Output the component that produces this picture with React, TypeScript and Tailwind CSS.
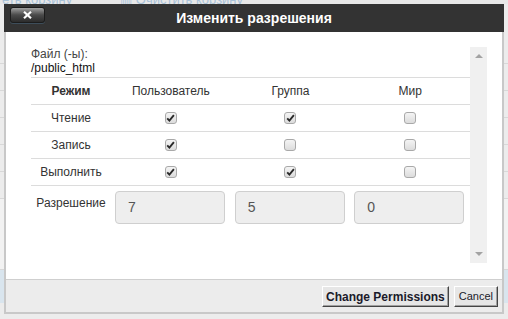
import React from "react";

const rows = [
  { label: "Чтение", checks: [true, true, false] },
  { label: "Запись", checks: [true, false, false] },
  { label: "Выполнить", checks: [true, true, false] },
];

const values = ["7", "5", "0"];

function Box({ checked }: { checked: boolean }) {
  return (
    <span className="flex h-3 w-3 items-center justify-center rounded-[3px] border border-[#a9a9a9] bg-linear-to-b from-[#f4f4f4] to-[#dcdcdc]">
      {checked && (
        <svg width="9" height="8" viewBox="0 0 9 8">
          <path d="M1.2 4.4 L3.4 6.6 L7.9 1.2" fill="none" stroke="#2a2a2a" strokeWidth="1.9" />
        </svg>
      )}
    </span>
  );
}

function Arrow({ up }: { up?: boolean }) {
  return (
    <svg width="8" height="4" viewBox="0 0 8 4">
      <path d={up ? "M0 4 L4 0 L8 4 Z" : "M0 0 L8 0 L4 4 Z"} fill="#a3a3a3" />
    </svg>
  );
}

export default function App() {
  return (
    <div className="relative h-[319px] w-[508px] overflow-hidden bg-[#ececec] font-['Liberation_Sans',Arial,sans-serif] text-[12px] text-[#333]">
      {/* page behind the dialog */}
      <div className="flex h-[4px] gap-8 overflow-hidden bg-[#e8e8e8] pl-[2px] text-[13px] leading-none text-[#a9c2d8]">
        <span className="-mt-[7px]">еть корзину</span>
        <span className="-mt-[7px] ml-4">▥ Очистить корзину</span>
      </div>
      <div className="flex flex-col">
        <div className="h-[60px] border-b border-[#d8d8d8]" />
        <div className="h-[27px] border-b border-[#d8d8d8]" />
        <div className="h-[27px] border-b border-[#d8d8d8]" />
        <div className="h-[27px] border-b border-[#d8d8d8]" />
        <div className="h-[27px] border-b border-[#d8d8d8]" />
        <div className="h-[27px] border-b border-[#d8d8d8]" />
        <div className="h-[71px] border-b border-[#d8d8d8] bg-[#f2f2f2]" />
        <div className="h-[33px] bg-[#d9e5ee]" />
      </div>

      {/* dialog */}
      <div className="absolute left-[4px] top-[4px] flex h-[310px] w-[500px] flex-col">
        <div className="grid h-[28px] grid-cols-[1fr_auto_1fr] items-center bg-[#333]">
          <div className="self-start pl-[6px] pt-[3px]">
            <div className="flex h-[16px] w-[35px] items-center justify-center rounded-[3px] border border-[#1c1c1c] bg-linear-to-b from-[#a0a0a0] via-[#4a4a4a] to-[#2c2c2c] shadow-[0_1px_0_#3d4d5a]">
              <svg width="9" height="8" viewBox="0 0 9 8">
                <path d="M1 0.8 L8 7.2 M8 0.8 L1 7.2" stroke="#fff" strokeWidth="2.2" />
              </svg>
            </div>
          </div>
          <div className="text-[14px] font-bold text-white">Изменить разрешения</div>
          <div />
        </div>

        <div className="flex flex-1 flex-col border-x-2 border-b-2 border-[#c8c8c8]">
          <div className="flex h-[247px] bg-white pb-[16px] pl-[25px] pr-[15px] pt-[15px]">
            <div className="flex flex-1 flex-col">
              <div className="mb-[2px] leading-[14px]">
                <div className="text-[#444]">Файл (-ы):</div>
                <div className="text-[#111]">/public_html</div>
              </div>
              <div className="grid grid-cols-[80px_1fr_1fr_1fr]">
                <div className="col-span-4 grid grid-cols-subgrid border-t border-[#dcdcdc]">
                  <div className="flex h-[26px] items-center justify-center font-bold">Режим</div>
                  <div className="flex h-[26px] items-center justify-center">Пользователь</div>
                  <div className="flex h-[26px] items-center justify-center">Группа</div>
                  <div className="flex h-[26px] items-center justify-center">Мир</div>
                </div>
                {rows.map((r) => (
                  <div key={r.label} className="col-span-4 grid grid-cols-subgrid border-t border-[#dcdcdc]">
                    <div className="flex h-[26px] items-center justify-center">{r.label}</div>
                    {r.checks.map((c, i) => (
                      <div key={i} className="flex h-[26px] items-center justify-center">
                        <Box checked={c} />
                      </div>
                    ))}
                  </div>
                ))}
                <div className="col-span-4 grid grid-cols-subgrid border-t border-[#dcdcdc] pt-[5px]">
                  <div className="pt-[5px] text-center leading-[14px]">Разрешение</div>
                  {values.map((v, i) => (
                    <div key={i} className="pl-[4px]">
                      <div className="flex h-[33px] w-[110px] items-center rounded-[4px] border border-[#cfcfcf] bg-[#eee] pl-[12px] text-[14px] text-[#555]">
                        {v}
                      </div>
                    </div>
                  ))}
                </div>
              </div>
            </div>
            <div className="flex w-[17px] flex-col items-center justify-between bg-[#f0f0f0] py-[7px]">
              <Arrow up />
              <Arrow />
            </div>
          </div>

          <div className="flex flex-1 items-start justify-end gap-[5px] border-t border-[#cfcfcf] bg-[#ececec] pr-[4px] pt-[6px]">
            <button className="h-[21px] border border-b-[#444] border-l-white border-r-[#444] border-t-white bg-[#e6e6e6] px-[3px] text-[12px] font-bold leading-none text-[#1a1a2a] shadow-[inset_-1px_-1px_0_#a0a0a0]">
              Change Permissions
            </button>
            <button className="h-[21px] border border-b-[#444] border-l-white border-r-[#444] border-t-white bg-[#e6e6e6] px-[4px] text-[11px] leading-none text-[#1a1a2a] shadow-[inset_-1px_-1px_0_#a0a0a0]">
              Cancel
            </button>
          </div>
        </div>
      </div>
    </div>
  );
}
